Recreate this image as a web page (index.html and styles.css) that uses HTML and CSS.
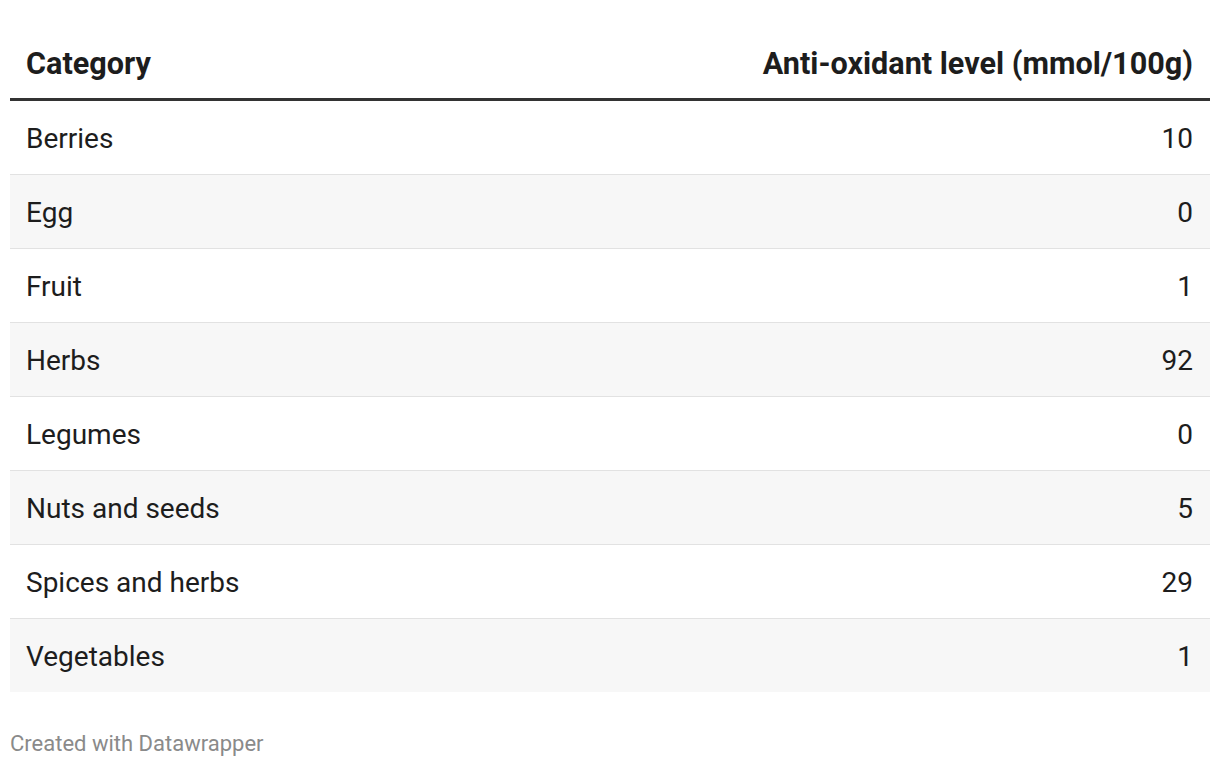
FILE: index.html
```html
<!DOCTYPE html>
<html>
<head>
<meta charset="utf-8">
<link rel="stylesheet" href="styles.css">
</head>
<body>
<div class="chart">
  <table class="data">
    <thead>
      <tr><th class="left">Category</th><th class="right">Anti-oxidant level (mmol/100g)</th></tr>
    </thead>
    <tbody>
      <tr><td>Berries</td><td class="num">10</td></tr>
      <tr><td>Egg</td><td class="num">0</td></tr>
      <tr><td>Fruit</td><td class="num">1</td></tr>
      <tr><td>Herbs</td><td class="num">92</td></tr>
      <tr><td>Legumes</td><td class="num">0</td></tr>
      <tr><td>Nuts and seeds</td><td class="num">5</td></tr>
      <tr><td>Spices and herbs</td><td class="num">29</td></tr>
      <tr><td>Vegetables</td><td class="num">1</td></tr>
    </tbody>
  </table>
  <div class="footer">Created with Datawrapper</div>
</div>
</body>
</html>
```
FILE: styles.css
```css
html, body {
  margin: 0;
  padding: 0;
  background: #ffffff;
}
body {
  font-family: Roboto, "Liberation Sans", Arial, sans-serif;
  color: #1d1d1d;
}
.chart {
  padding: 0 10px;
}
.data {
  width: 100%;
  border-collapse: collapse;
  font-size: 28px;
}
.data th {
  font-size: 30.6px;
  font-weight: 700;
  line-height: 30px;
  padding: 49px 17px 19px 16px;
  border-bottom: 3px solid #333333;
  color: #1d1d1d;
}
.data th.left { text-align: left; }
.data th.right { text-align: right; }
.data td {
  height: 71px;
  padding: 2px 17px 0 16px;
  line-height: 30px;
  vertical-align: middle;
  border-top: 1px solid #e2e2e2;
  font-weight: 400;
}
.data tbody tr:first-child td { border-top: none; }
.data tbody tr:nth-child(even) td { background: #f7f7f7; }
.data td.num { text-align: right; }
.footer {
  margin-top: 39px;
  font-size: 22px;
  line-height: 26px;
  color: #8a8a8a;
}
```
